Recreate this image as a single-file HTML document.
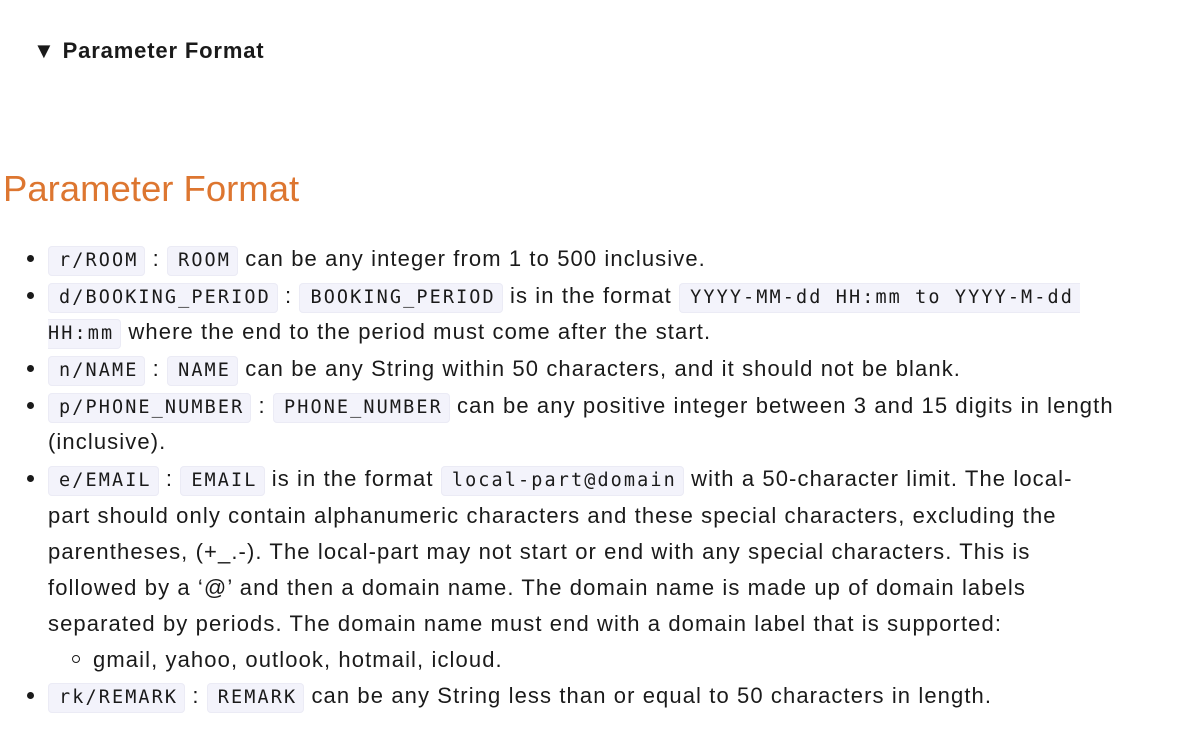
<!DOCTYPE html>
<html><head><meta charset="utf-8"><style>
body{margin:0;width:1180px;height:744px;background:#fff;font-family:"Liberation Sans",sans-serif;color:#1a1a1a;position:relative;overflow:hidden}
.l{position:absolute;white-space:nowrap;font-size:22px;letter-spacing:1.1px;line-height:24px}
code{font-family:"DejaVu Sans Mono","Liberation Mono",monospace;font-size:18.5px;letter-spacing:2.1px;background:#f3f3fb;border:1px solid #ebebf5;border-radius:4px;padding:3px 6px 4px 10px}
.b{position:absolute;width:7px;height:7px;border-radius:50%;background:#1a1a1a}
.c{position:absolute;width:8px;height:8px;border-radius:50%;border:1.3px solid #1a1a1a;box-sizing:border-box}
</style></head><body>
<div class="l" style="left:33px;top:39px;font-weight:bold;letter-spacing:0.85px">▼ Parameter Format</div>
<div class="l" style="left:3px;top:169px;font-size:36.5px;letter-spacing:0;line-height:40px;color:#dd7630">Parameter Format</div>

<div class="b" style="left:27px;top:255px"></div>
<div class="l" style="left:48px;top:247px"><code>r/ROOM</code> : <code>ROOM</code> can be any integer from 1 to 500 inclusive.</div>

<div class="b" style="left:27px;top:292px"></div>
<div class="l" style="left:48px;top:284px"><code>d/BOOKING_PERIOD</code> : <code>BOOKING_PERIOD</code> is in the format <code style="border-right:0;border-radius:4px 0 0 4px">YYYY-MM-dd HH:mm to YYYY-M-dd</code></div>
<div class="l" style="left:48px;top:320px"><code style="padding-left:0;border-left:0;border-radius:0 4px 4px 0">HH:mm</code> where the end to the period must come after the start.</div>

<div class="b" style="left:27px;top:365px"></div>
<div class="l" style="left:48px;top:357px"><code>n/NAME</code> : <code>NAME</code> can be any String within 50 characters, and it should not be blank.</div>

<div class="b" style="left:27px;top:402px"></div>
<div class="l" style="left:48px;top:394px"><code>p/PHONE_NUMBER</code> : <code>PHONE_NUMBER</code> can be any positive integer between 3 and 15 digits in length</div>
<div class="l" style="left:48px;top:430px">(inclusive).</div>

<div class="b" style="left:27px;top:475px"></div>
<div class="l" style="left:48px;top:467px"><code>e/EMAIL</code> : <code>EMAIL</code> is in the format <code>local-part@domain</code> with a 50-character limit. The local-</div>
<div class="l" style="left:48px;top:504px">part should only contain alphanumeric characters and these special characters, excluding the</div>
<div class="l" style="left:48px;top:540px">parentheses, (+_.-). The local-part may not start or end with any special characters. This is</div>
<div class="l" style="left:48px;top:576px">followed by a ‘@’ and then a domain name. The domain name is made up of domain labels</div>
<div class="l" style="left:48px;top:612px">separated by periods. The domain name must end with a domain label that is supported:</div>
<div class="c" style="left:72px;top:655px"></div>
<div class="l" style="left:93px;top:648px">gmail, yahoo, outlook, hotmail, icloud.</div>

<div class="b" style="left:27px;top:692px"></div>
<div class="l" style="left:48px;top:684px"><code>rk/REMARK</code> : <code>REMARK</code> can be any String less than or equal to 50 characters in length.</div>
</body></html>
